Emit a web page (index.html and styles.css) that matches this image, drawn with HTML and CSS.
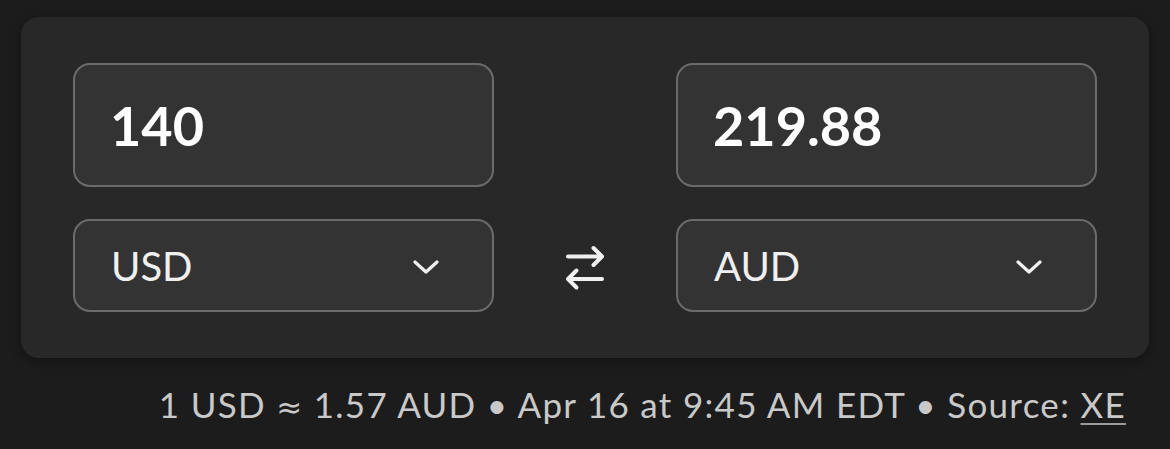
FILE: index.html
```html
<!DOCTYPE html>
<html lang="en">
<head>
    <meta charset="UTF-8">
    <meta name="viewport" content="width=device-width, initial-scale=1.0">
    <title>Currency Converter</title>
    <link rel="stylesheet" href="styles.css">
</head>
<body>
    <div class="converter">
        <div class="card">
            <input class="amount" type="text" value="140" aria-label="From amount">
            <div class="spacer"></div>
            <input class="amount" type="text" value="219.88" aria-label="To amount">

            <div class="currency">
                <span>USD</span>
                <svg class="chevron" width="26" height="16" viewBox="0 0 26 16">
                    <path d="M2 3 L13 13 L24 3" fill="none" stroke="currentColor" stroke-width="3.2" stroke-linecap="round" stroke-linejoin="round"/>
                </svg>
            </div>
            <div class="swap">
                <svg width="40" height="46" viewBox="0 0 40 46">
                    <g fill="none" stroke="currentColor" stroke-width="4" stroke-linecap="round" stroke-linejoin="round">
                        <path d="M3 11.5 H37 M28.5 3 L37 11.5 L28.5 20"/>
                        <path d="M37 34 H3 M11.5 25.5 L3 34 L11.5 42.5"/>
                    </g>
                </svg>
            </div>
            <div class="currency">
                <span>AUD</span>
                <svg class="chevron" width="26" height="16" viewBox="0 0 26 16">
                    <path d="M2 3 L13 13 L24 3" fill="none" stroke="currentColor" stroke-width="3.2" stroke-linecap="round" stroke-linejoin="round"/>
                </svg>
            </div>
        </div>

        <p class="rate">1 USD <span class="approx">≈</span> 1.57 AUD • Apr 16 at 9:45 AM EDT • Source: <a href="#">XE</a></p>
    </div>
</body>
</html>
```

FILE: styles.css
```css
body {
    margin: 0;
    background-color: #1c1c1c;
    font-family: Lato, "Open Sans", sans-serif;
    color: #f2f2f2;
}

.converter {
    padding: 17px 21px 0 21px;
}

.card {
    display: grid;
    grid-template-columns: 1fr 182px 1fr;
    grid-template-rows: 124px 93px;
    row-gap: 32px;
    padding: 46px 52px;
    background: #282828;
    border-radius: 18px;
    box-shadow: 0 3px 12px rgba(0, 0, 0, 0.35);
}

.amount,
.currency {
    box-sizing: border-box;
    width: 100%;
    height: 100%;
    margin: 0;
    background: #333333;
    border: 2px solid #6b6b6b;
    border-radius: 17px;
    color: #ffffff;
}

.amount {
    padding: 0 0 0 35px;
    font-family: Lato, sans-serif;
    font-size: 54px;
    font-weight: 700;
    outline: none;
}

.currency {
    display: flex;
    align-items: center;
    justify-content: space-between;
    padding: 0 53px 0 36px;
    font-size: 40px;
    color: #f0f0f0;
}

.chevron {
    margin-top: 2px;
}

.swap {
    display: flex;
    align-items: center;
    justify-content: center;
    padding-top: 4px;
    color: #f0f0f0;
}

.rate {
    margin: 25px 23px 0 0;
    text-align: right;
    font-size: 35px;
    font-weight: 400;
    line-height: 42px;
    letter-spacing: 1.3px;
    color: #c9c9c9;
}

.rate .approx {
    font-family: "DejaVu Sans", sans-serif;
    font-size: 31px;
}

.rate a {
    color: #c9c9c9;
    text-decoration: underline;
    text-decoration-color: #9a9a9a;
    text-decoration-thickness: 2px;
    text-underline-offset: 5px;
}
```
